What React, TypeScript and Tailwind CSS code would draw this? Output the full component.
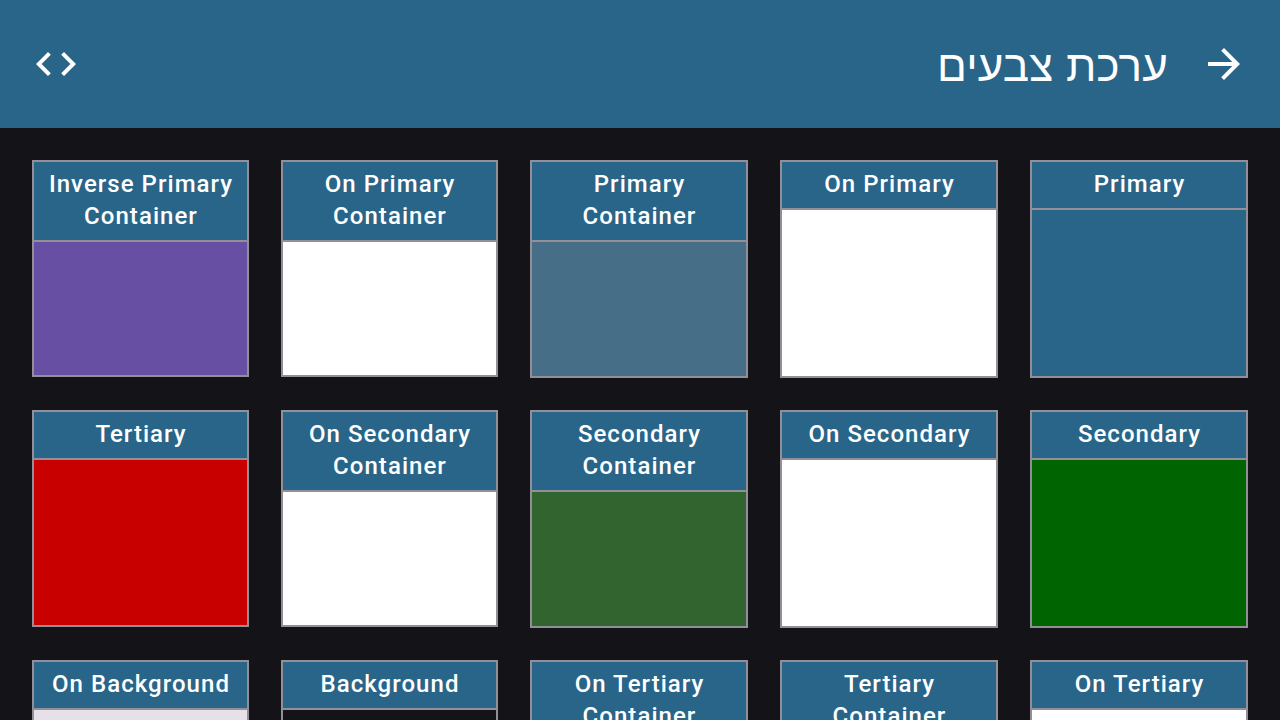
type Swatch = { name: string; color: string };

const swatches: Swatch[] = [
  { name: 'Primary', color: 'bg-[#296589]' },
  { name: 'On Primary', color: 'bg-white' },
  { name: 'Primary Container', color: 'bg-[#466e87]' },
  { name: 'On Primary Container', color: 'bg-white' },
  { name: 'Inverse Primary Container', color: 'bg-[#6750a4]' },
  { name: 'Secondary', color: 'bg-[#006400]' },
  { name: 'On Secondary', color: 'bg-white' },
  { name: 'Secondary Container', color: 'bg-[#326430]' },
  { name: 'On Secondary Container', color: 'bg-white' },
  { name: 'Tertiary', color: 'bg-[#c80000]' },
  { name: 'On Tertiary', color: 'bg-white' },
  { name: 'Tertiary Container', color: 'bg-[#c85050]' },
  { name: 'On Tertiary Container', color: 'bg-white' },
  { name: 'Background', color: 'bg-[#131318]' },
  { name: 'On Background', color: 'bg-[#e6e0e9]' },
];

function Icon({ d }: { d: string }) {
  return (
    <svg viewBox="0 0 24 24" className="size-12 shrink-0 fill-white" aria-hidden="true">
      <path d={d} />
    </svg>
  );
}

function SwatchCard({ name, color }: Swatch) {
  return (
    <article dir="ltr" className="flex aspect-square flex-col border-2 border-[#938f99]">
      <h2 className="border-b-2 border-[#938f99] bg-[#296589] pt-1.5 pr-2 pb-2 pl-[9px] text-center text-2xl leading-8 font-medium tracking-[1.04px] text-white">
        {name}
      </h2>
      <div className={`flex-1 ${color}`} />
    </article>
  );
}

export default function App() {
  return (
    <div dir="rtl" className="h-screen overflow-hidden bg-[#131318] font-['Roboto',sans-serif]">
      <header className="flex h-32 items-center bg-[#296589] px-8 text-white">
        <button type="button" aria-label="חזרה">
          <Icon d="M12 4l-1.41 1.41L16.17 11H4v2h12.17l-5.58 5.59L12 20l8-8z" />
        </button>
        <h1 className="ms-8 flex-1 pt-1 font-['Liberation_Sans',sans-serif] text-[44px] leading-[56px] tracking-[0.2px]">ערכת צבעים</h1>
        <button type="button" aria-label="קוד">
          <Icon d="M9.4 16.6L4.8 12l4.6-4.6L8 6l-6 6 6 6 1.4-1.4zm5.2 0l4.6-4.6-4.6-4.6L16 6l6 6-6 6-1.4-1.4z" />
        </button>
      </header>
      <main className="grid grid-cols-[218px_218px_218px_217px_217px] items-start gap-8 p-8">
        {swatches.map((swatch) => (
          <SwatchCard key={swatch.name} {...swatch} />
        ))}
      </main>
    </div>
  );
}
